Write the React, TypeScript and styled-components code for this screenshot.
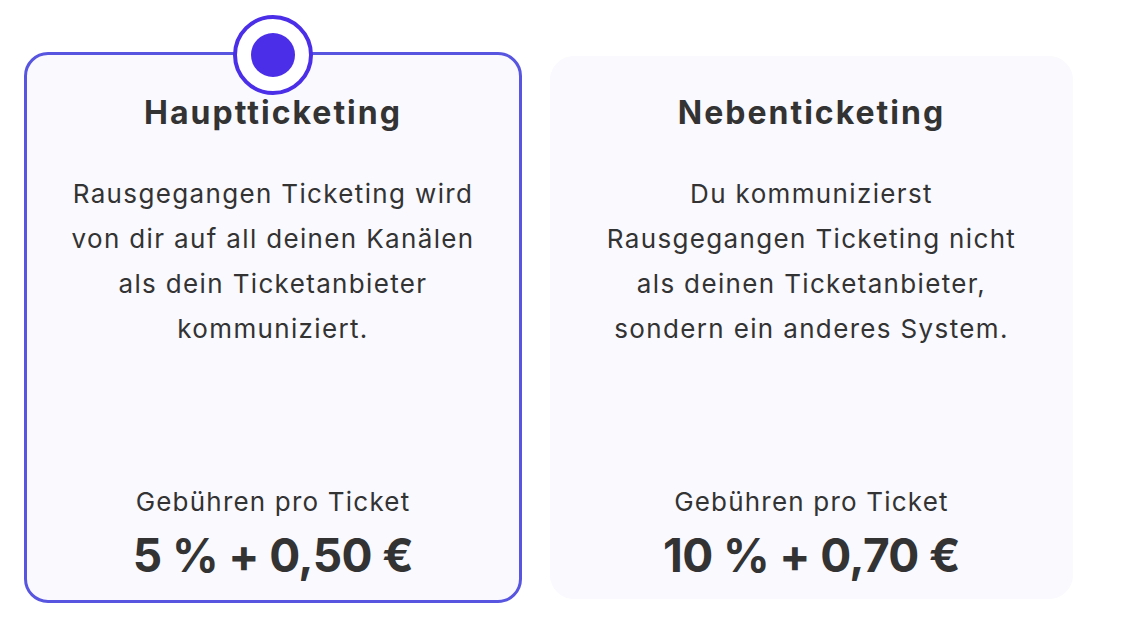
import React from "react";
import styled, { createGlobalStyle } from "styled-components";

const GlobalStyle = createGlobalStyle`
  html, body {
    margin: 0;
    padding: 0;
    background: #ffffff;
  }

  body {
    font-family: Inter, "Noto Sans", sans-serif;
    color: #333333;
  }
`;

const Options = styled.div`
  display: grid;
  grid-template-columns: 498px 523px;
  column-gap: 28px;
  align-items: center;
  padding: 52px 0 0 24px;
`;

const Card = styled.div<{ $selected?: boolean }>`
  position: relative;
  box-sizing: border-box;
  display: flex;
  flex-direction: column;
  align-items: center;
  text-align: center;
  background: #f9f9fe;
  border-radius: 24px;
  cursor: pointer;
  height: ${(p) => (p.$selected ? "551px" : "543px")};
  padding: ${(p) => (p.$selected ? "38px 10px 17px" : "37px 10px 16px")};
  border: ${(p) => (p.$selected ? "3px solid #5856e0" : "none")};
`;

const Radio = styled.span`
  position: absolute;
  top: -40px;
  left: 50%;
  transform: translateX(-50%);
  width: 80px;
  height: 80px;
  box-sizing: border-box;
  border-radius: 50%;
  border: 4px solid #4a2ee8;
  background: #ffffff;
  display: flex;
  align-items: center;
  justify-content: center;

  &::after {
    content: "";
    width: 44px;
    height: 44px;
    border-radius: 50%;
    background: #4a2ee8;
  }
`;

const Title = styled.h2`
  margin: 0;
  font-size: 32px;
  line-height: 40px;
  font-weight: 700;
  letter-spacing: 2px;
`;

const Description = styled.p`
  margin: 38px 0 0;
  font-size: 26px;
  line-height: 45px;
  font-weight: 400;
  letter-spacing: 1.35px;
`;

const Fees = styled.div`
  margin-top: auto;
  display: flex;
  flex-direction: column;
  align-items: center;
  gap: 8px;
`;

const FeeLabel = styled.div`
  font-size: 26px;
  line-height: 34px;
  letter-spacing: 1.2px;
`;

const FeePrice = styled.div`
  font-size: 46px;
  line-height: 56px;
  font-weight: 700;
  letter-spacing: -0.6px;
`;

interface PlanProps {
  title: string;
  lines: string[];
  price: string;
  selected?: boolean;
}

const Plan: React.FC<PlanProps> = ({ title, lines, price, selected }) => (
  <Card $selected={selected}>
    {selected && <Radio />}
    <Title>{title}</Title>
    <Description>
      {lines.map((line, i) => (
        <React.Fragment key={i}>
          {line}
          {i < lines.length - 1 && <br />}
        </React.Fragment>
      ))}
    </Description>
    <Fees>
      <FeeLabel>Gebühren pro Ticket</FeeLabel>
      <FeePrice>{price}</FeePrice>
    </Fees>
  </Card>
);

export default function App() {
  return (
    <>
      <GlobalStyle />
      <Options>
        <Plan
          selected
          title="Hauptticketing"
          lines={[
            "Rausgegangen Ticketing wird",
            "von dir auf all deinen Kanälen",
            "als dein Ticketanbieter",
            "kommuniziert.",
          ]}
          price="5 % + 0,50 €"
        />
        <Plan
          title="Nebenticketing"
          lines={[
            "Du kommunizierst",
            "Rausgegangen Ticketing nicht",
            "als deinen Ticketanbieter,",
            "sondern ein anderes System.",
          ]}
          price="10 % + 0,70 €"
        />
      </Options>
    </>
  );
}
